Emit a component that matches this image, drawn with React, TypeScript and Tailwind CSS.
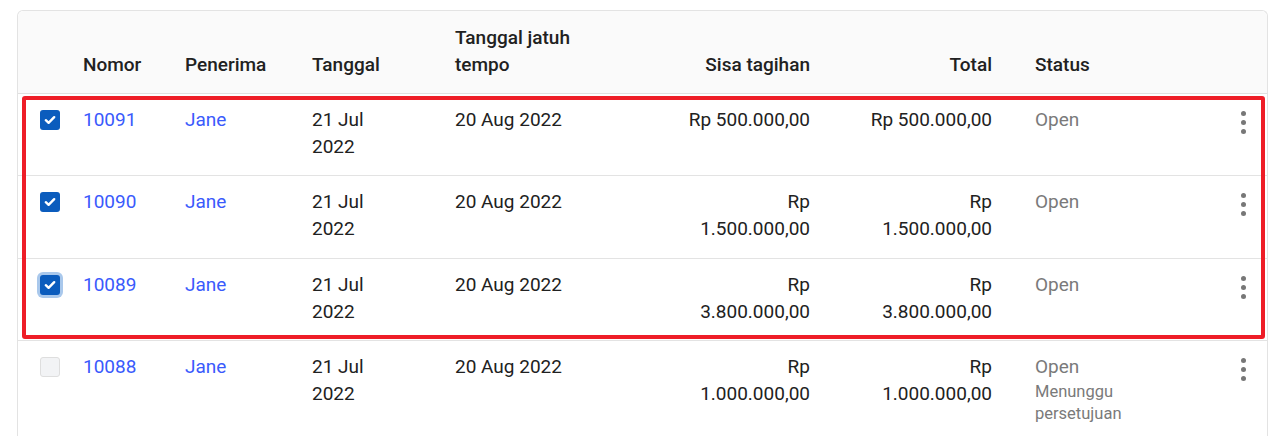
import React from "react";

type Row = {
  no: string;
  checked: boolean;
  focused?: boolean;
  sisa: string;
  total: string;
  sub?: boolean;
  h: string;
};

const rows: Row[] = [
  { no: "10091", checked: true, sisa: "Rp 500.000,00", total: "Rp 500.000,00", h: "h-[82px]" },
  { no: "10090", checked: true, sisa: "Rp 1.500.000,00", total: "Rp 1.500.000,00", h: "h-[83px]" },
  { no: "10089", checked: true, focused: true, sisa: "Rp 3.800.000,00", total: "Rp 3.800.000,00", h: "h-[82px]" },
  { no: "10088", checked: false, sisa: "Rp 1.000.000,00", total: "Rp 1.000.000,00", sub: true, h: "min-h-[100px]" },
];

const grid =
  "grid grid-cols-[65px_102px_127px_143px_200px_155px_182px_233px_42px]";

function Checkbox({ checked, focused }: { checked: boolean; focused?: boolean }) {
  if (!checked) {
    return (
      <div className="w-[20px] h-[20px] rounded-[3px] bg-[#f2f3f5] border border-[#dedede]" />
    );
  }
  return (
    <div
      className={
        "w-[20px] h-[20px] rounded-[3px] bg-[#0b5cbd] flex items-center justify-center " +
        (focused ? "ring-[3px] ring-[#a9c8ec]" : "")
      }
    >
      <svg width="12" height="10" viewBox="0 0 12 10">
        <path
          d="M1.8 5.2 L4.6 7.8 L10.2 2.2"
          stroke="white"
          strokeWidth="2.4"
          fill="none"
          strokeLinecap="round"
          strokeLinejoin="round"
        />
      </svg>
    </div>
  );
}

function Kebab() {
  return (
    <div className="flex flex-col items-center gap-[4px] w-[6px]">
      <div className="w-[5px] h-[5px] rounded-full bg-[#777]" />
      <div className="w-[5px] h-[5px] rounded-full bg-[#777]" />
      <div className="w-[5px] h-[5px] rounded-full bg-[#777]" />
    </div>
  );
}

export default function App() {
  return (
    <div
      className="relative w-[1284px] h-[436px] overflow-hidden bg-white text-[19px] leading-[27px] text-[#212121]"
      style={{ fontFamily: "Roboto, 'Noto Sans', Arial, sans-serif" }}
    >
      <div className="ml-[17px] mt-[10px] w-[1251px] border-x border-t border-[#e3e3e3] rounded-t-[6px]">
        {/* header */}
        <div className={grid + " h-[83px] bg-[#fafafa] border-b border-[#e0e0e0] items-end pb-[15px] font-medium rounded-t-[6px]"}>
          <div />
          <div>Nomor</div>
          <div>Penerima</div>
          <div>Tanggal</div>
          <div className="max-w-[150px]">Tanggal jatuh tempo</div>
          <div className="text-right">Sisa tagihan</div>
          <div className="text-right">Total</div>
          <div className="pl-[43px]">Status</div>
          <div />
        </div>
        {rows.map((r) => (
          <div key={r.no} className={grid + " " + r.h + " border-b border-[#e3e3e3]"}>
            <div className="pl-[22px] pt-[16px]">
              <Checkbox checked={r.checked} focused={r.focused} />
            </div>
            <div className="pt-[12px] text-[#3a5afc]">{r.no}</div>
            <div className="pt-[12px] text-[#3a5afc]">Jane</div>
            <div className="pt-[12px] max-w-[80px]">21 Jul 2022</div>
            <div className="pt-[12px]">20 Aug 2022</div>
            <div className="pt-[12px] flex justify-end">
              <div className="max-w-[128px] text-right">{r.sisa}</div>
            </div>
            <div className="pt-[12px] flex justify-end">
              <div className="max-w-[128px] text-right">{r.total}</div>
            </div>
            <div className="pt-[12px] pl-[43px] text-[#7a7a7a]">
              <div>Open</div>
              {r.sub && (
                <div className="text-[16.5px] leading-[22px] max-w-[150px] pt-[1px]">Menunggu persetujuan</div>
              )}
            </div>
            <div className="pt-[17px] pl-[15px]">
              <Kebab />
            </div>
          </div>
        ))}
      </div>
      <div className="absolute left-[22px] top-[96px] w-[1243px] h-[243px] border-4 border-[#ee1d27] rounded-[3px] pointer-events-none" />
    </div>
  );
}
